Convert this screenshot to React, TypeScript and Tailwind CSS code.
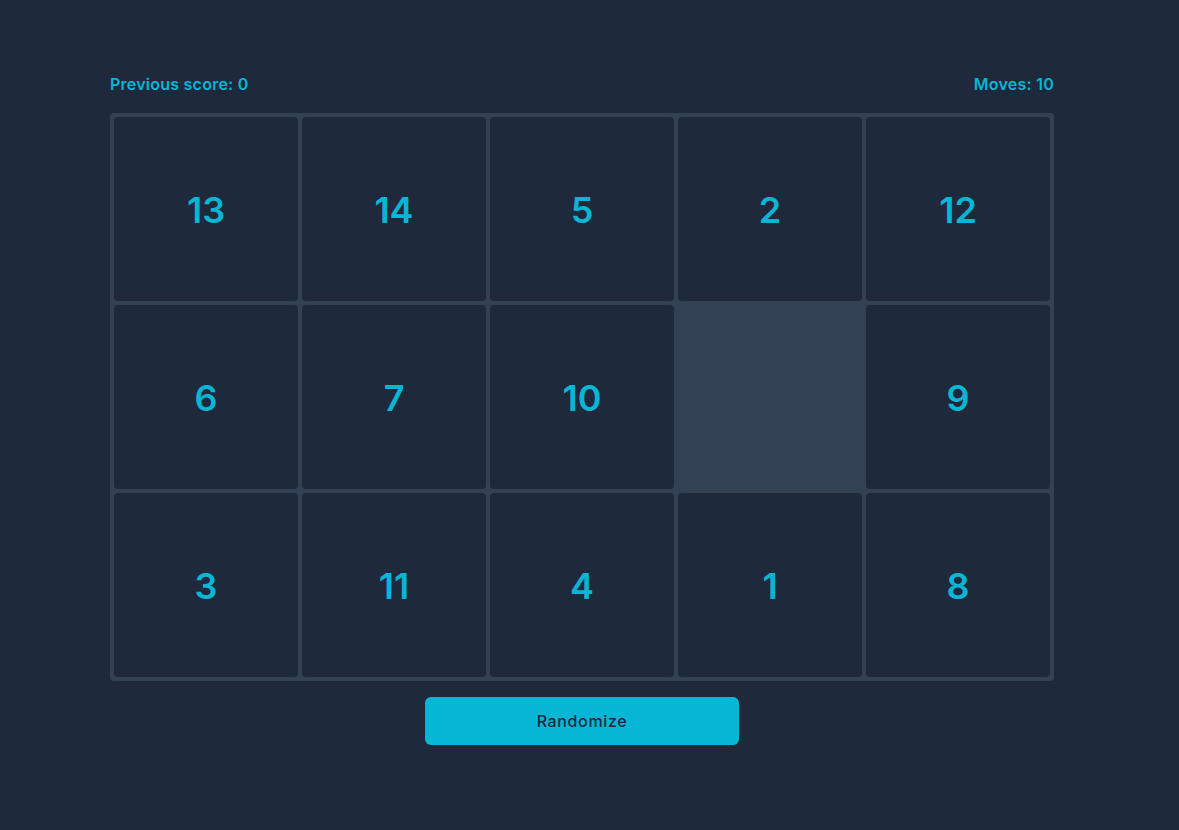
import { useState } from "react";

const START = [13, 14, 5, 2, 12, 6, 7, 10, 0, 9, 3, 11, 4, 1, 8];

export default function App() {
  const [tiles, setTiles] = useState<number[]>(START);
  const [moves, setMoves] = useState(10);
  const [prevScore, setPrevScore] = useState(0);

  function handleClick(idx: number) {
    const empty = tiles.indexOf(0);
    const sameRow = Math.floor(idx / 5) === Math.floor(empty / 5);
    const adjacent =
      (sameRow && Math.abs(idx - empty) === 1) || Math.abs(idx - empty) === 5;
    if (!adjacent) return;
    const next = [...tiles];
    next[empty] = next[idx];
    next[idx] = 0;
    setTiles(next);
    setMoves((m) => m + 1);
  }

  function randomize() {
    const next = [...tiles].sort(() => Math.random() - 0.5);
    setPrevScore(moves);
    setMoves(0);
    setTiles(next);
  }

  return (
    <div
      className="min-h-screen bg-[#1e293b] pt-[72px]"
      style={{ fontFamily: "Inter, 'Noto Sans', sans-serif" }}
    >
      <div className="ml-[110px] w-[944px]">
        {/* Scores */}
        <div className="flex justify-between text-base font-semibold leading-6 tracking-[0.015em] text-[#06b6d4] mb-[17px]">
          <span>Previous score: {prevScore}</span>
          <span>Moves: {moves}</span>
        </div>

        {/* Board */}
        <div className="grid grid-cols-5 gap-1 p-1 bg-[#334155] rounded">
          {tiles.map((n, idx) =>
            n === 0 ? (
              <div key="empty" className="h-[184px] bg-[#334155]" />
            ) : (
              <button
                key={n}
                onClick={() => handleClick(idx)}
                className="h-[184px] bg-[#1e293b] rounded flex items-center justify-center pt-0.5 text-4xl font-semibold text-[#06b6d4]"
              >
                {n}
              </button>
            )
          )}
        </div>

        <div className="flex justify-center mt-4">
          <button
            onClick={randomize}
            className="w-1/3 h-12 bg-[#06b6d4] rounded-md text-base font-medium tracking-[0.04em] text-[#1e293b]"
          >
            Randomize
          </button>
        </div>
      </div>
    </div>
  );
}
